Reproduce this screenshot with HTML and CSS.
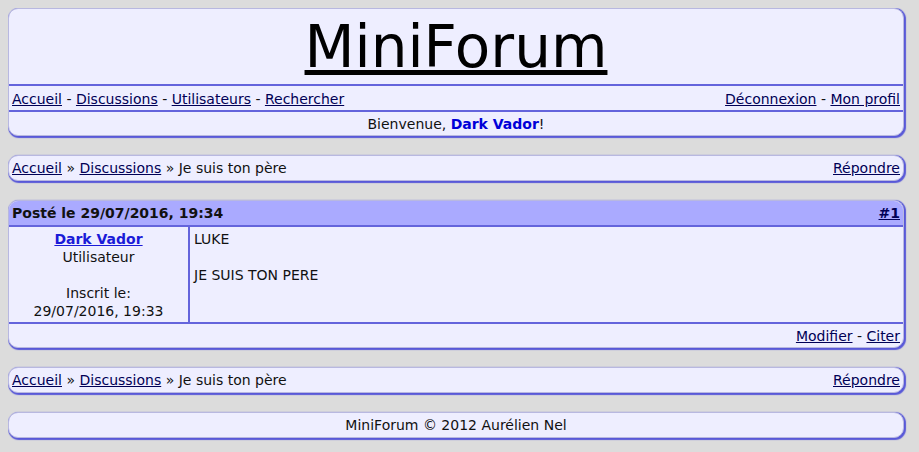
FILE: index.html
```html
<!DOCTYPE html>
<html lang="fr">
<head>
<meta charset="utf-8">
<title>MiniForum</title>
<link rel="stylesheet" href="styles.css">
</head>
<body>
<div class="box header">
  <div class="title-row"><a class="title" href="#">MiniForum</a></div>
  <div class="row nav">
    <div><a href="#">Accueil</a> - <a href="#">Discussions</a> - <a href="#">Utilisateurs</a> - <a href="#">Rechercher</a></div>
    <div><a href="#">Déconnexion</a> - <a href="#">Mon profil</a></div>
  </div>
  <div class="row welcome">Bienvenue, <span class="user">Dark Vador</span>!</div>
</div>

<div class="box crumbs">
  <div><a href="#">Accueil</a> » <a href="#">Discussions</a> » Je suis ton père</div>
  <div><a href="#">Répondre</a></div>
</div>

<div class="box post">
  <div class="post-head">
    <span>Posté le 29/07/2016, 19:34</span>
    <a href="#">#1</a>
  </div>
  <div class="post-body">
    <div class="author">
      <a class="author-name" href="#">Dark Vador</a><br>
      Utilisateur<br><br>
      Inscrit le:<br>
      29/07/2016, 19:33
    </div>
    <div class="message">LUKE<br><br>JE SUIS TON PERE</div>
  </div>
  <div class="post-foot"><a href="#">Modifier</a> - <a href="#">Citer</a></div>
</div>

<div class="box crumbs">
  <div><a href="#">Accueil</a> » <a href="#">Discussions</a> » Je suis ton père</div>
  <div><a href="#">Répondre</a></div>
</div>

<div class="box footer">MiniForum © 2012 Aurélien Nel</div>
</body>
</html>
```
FILE: styles.css
```css
body {
  margin: 8px;
  background: #dcdcdc;
  font-family: "DejaVu Sans", "Open Sans", sans-serif;
  font-size: 14px;
  line-height: 18px;
  color: #111;
}
a { color: #000055; }
.box {
  width: 894px;
  background: #eeeeff;
  border: 1px solid #b8b8e0;
  border-radius: 10px;
  box-shadow: 1px 1px 1px 1px #5858d8;
  margin-bottom: 19px;
}
.header, .post { overflow: hidden; }
.title-row {
  height: 75px;
  display: flex;
  justify-content: center;
  align-items: flex-start;
}
.title {
  color: #000;
  font-size: 58px;
  line-height: 70px;
  margin-top: 3px;
}
.row {
  border-top: 2px solid #6464dc;
  height: 24px;
  line-height: 26px;
  padding: 0 3px;
}
.nav { display: flex; justify-content: space-between; }
.welcome { text-align: center; height: 23px; line-height: 24px; }
.user { color: #0000d8; font-weight: bold; }
.crumbs {
  display: flex;
  justify-content: space-between;
  height: 24px;
  line-height: 25px;
  padding: 0 3px;
  width: 888px;
}
.post-head {
  background: #aaaaff;
  display: flex;
  justify-content: space-between;
  font-weight: bold;
  height: 24px;
  line-height: 25px;
  padding: 0 3px;
}
.post-body {
  display: flex;
  border-top: 2px solid #6464dc;
  border-bottom: 2px solid #6464dc;
  height: 95px;
}
.author {
  width: 179px;
  border-right: 2px solid #6464dc;
  text-align: center;
  padding-top: 3px;
}
.author-name { color: #1a1ad8; font-weight: bold; }
.message { padding: 3px 4px; }
.post-foot {
  text-align: right;
  height: 23px;
  line-height: 24px;
  padding: 0 3px;
}
.footer {
  text-align: center;
  height: 24px;
  line-height: 25px;
}
```
